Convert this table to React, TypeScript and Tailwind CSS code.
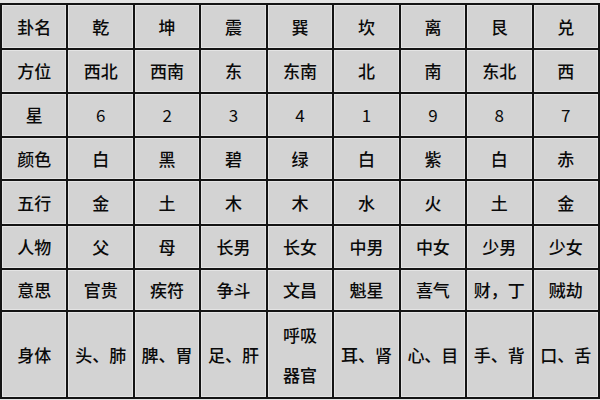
const rows: string[][] = [
  ["卦名", "乾", "坤", "震", "巽", "坎", "离", "艮", "兑"],
  ["方位", "西北", "西南", "东", "东南", "北", "南", "东北", "西"],
  ["星", "6", "2", "3", "4", "1", "9", "8", "7"],
  ["颜色", "白", "黑", "碧", "绿", "白", "紫", "白", "赤"],
  ["五行", "金", "土", "木", "木", "水", "火", "土", "金"],
  ["人物", "父", "母", "长男", "长女", "中男", "中女", "少男", "少女"],
  ["意思", "官贵", "疾符", "争斗", "文昌", "魁星", "喜气", "财，丁", "贼劫"],
  ["身体", "头、肺", "脾、胃", "足、肝", "呼吸\n器官", "耳、肾", "心、目", "手、背", "口、舌"],
];

const Cell = ({ text }: { text: string }) => {
  const lines = text.split("\n");
  const isNum = /^\d$/.test(text);
  return (
    <div className={`flex flex-col items-center justify-center bg-[#d3d3d3] border border-[#e4e4e4] text-[17px] text-[#0a0a0a] leading-[40px] ${isNum ? "font-normal" : "font-medium"}`}>
      {lines.map((l, i) => (
        <span key={i} className="whitespace-nowrap">{l}</span>
      ))}
    </div>
  );
};

export default function App() {
  return (
    <div className="w-[600px] h-[400px] bg-[#e4e4e4] pt-[3px] font-['Noto_Sans_CJK_SC','Noto_Sans',sans-serif]">
      <div className="grid grid-cols-9 grid-rows-[43px_42px_42px_41px_43px_42px_40px_85px] gap-[2px] p-[2px] bg-[#141414] w-[600px]">
        {rows.map((r, ri) =>
          r.map((c, ci) => <Cell key={`${ri}-${ci}`} text={c} />)
        )}
      </div>
    </div>
  );
}
